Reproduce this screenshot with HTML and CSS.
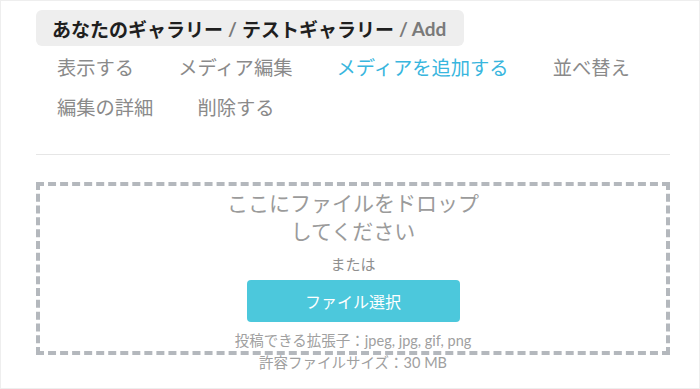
FILE: index.html
```html
<!DOCTYPE html>
<html lang="ja">
<head>
<meta charset="utf-8">
<title>Add media</title>
<link rel="stylesheet" href="styles.css">
</head>
<body>
<div class="page">
  <div class="crumbs">
    <span class="crumb">あなたのギャラリー</span>
    <span class="sep">/</span>
    <span class="crumb">テストギャラリー</span>
    <span class="sep">/ Add</span>
  </div>
  <nav class="tabs">
    <a class="tab">表示する</a>
    <a class="tab">メディア編集</a>
    <a class="tab active">メディアを追加する</a>
    <a class="tab">並べ替え</a>
    <a class="tab">編集の詳細</a>
    <a class="tab">削除する</a>
  </nav>
  <hr class="rule">
  <div class="drop">
    <div class="drop-title">ここにファイルをドロップ<br>してください</div>
    <div class="or">または</div>
    <button class="pick">ファイル選択</button>
    <div class="info">投稿できる拡張子：jpeg, jpg, gif, png</div>
    <div class="info">許容ファイルサイズ：30 MB</div>
  </div>
</div>
</body>
</html>
```
FILE: styles.css
```css
html, body {
  margin: 0;
  padding: 0;
  background: #ffffff;
}
body {
  font-family: Lato, "Noto Sans CJK JP", sans-serif;
}
.page {
  box-sizing: border-box;
  width: 700px;
  height: 389px;
  border: 1px solid #eeeeee;
  padding: 9px 29px 0 35px;
  overflow: hidden;
}
.crumbs {
  display: inline-flex;
  align-items: center;
  gap: 5px;
  background: #eeeeee;
  border-radius: 6px;
  height: 36px;
  padding: 0 18px 0 16px;
  font-size: 19px;
  font-weight: 700;
  color: #1f1f1f;
  box-sizing: border-box;
}
.crumbs .sep {
  color: #7a7a7a;
}
.tabs {
  display: flex;
  flex-wrap: wrap;
  margin-top: 2px;
}
.tab {
  padding: 0 23px 0 21px;
  line-height: 40px;
  font-size: 19.3px;
  color: #8a8a8a;
  cursor: pointer;
}
.tab.active {
  color: #38b6de;
}
.rule {
  border: 0;
  border-top: 1px solid #e6e6e6;
  margin: 26px 0 0;
}
.drop {
  box-sizing: border-box;
  margin-top: 27px;
  height: 173px;
  border: 4px dashed #b4b8bd;
  padding-top: 3px;
  text-align: center;
  color: #9a9a9a;
}
.drop-title {
  font-size: 21px;
  line-height: 28px;
  color: #9b9b9b;
}
.or {
  margin-top: 8px;
  font-size: 15px;
  line-height: 22px;
  color: #8f8f8f;
}
.pick {
  display: block;
  margin: 5px auto 0;
  width: 213px;
  height: 42px;
  border: 0;
  border-radius: 4px;
  background: #4cc8dc;
  color: #ffffff;
  font-family: Lato, "Noto Sans CJK JP", sans-serif;
  font-size: 16px;
}
.info {
  font-size: 14.5px;
  line-height: 22px;
  color: #a0a0a0;
}
.pick + .info {
  margin-top: 8px;
}
```
